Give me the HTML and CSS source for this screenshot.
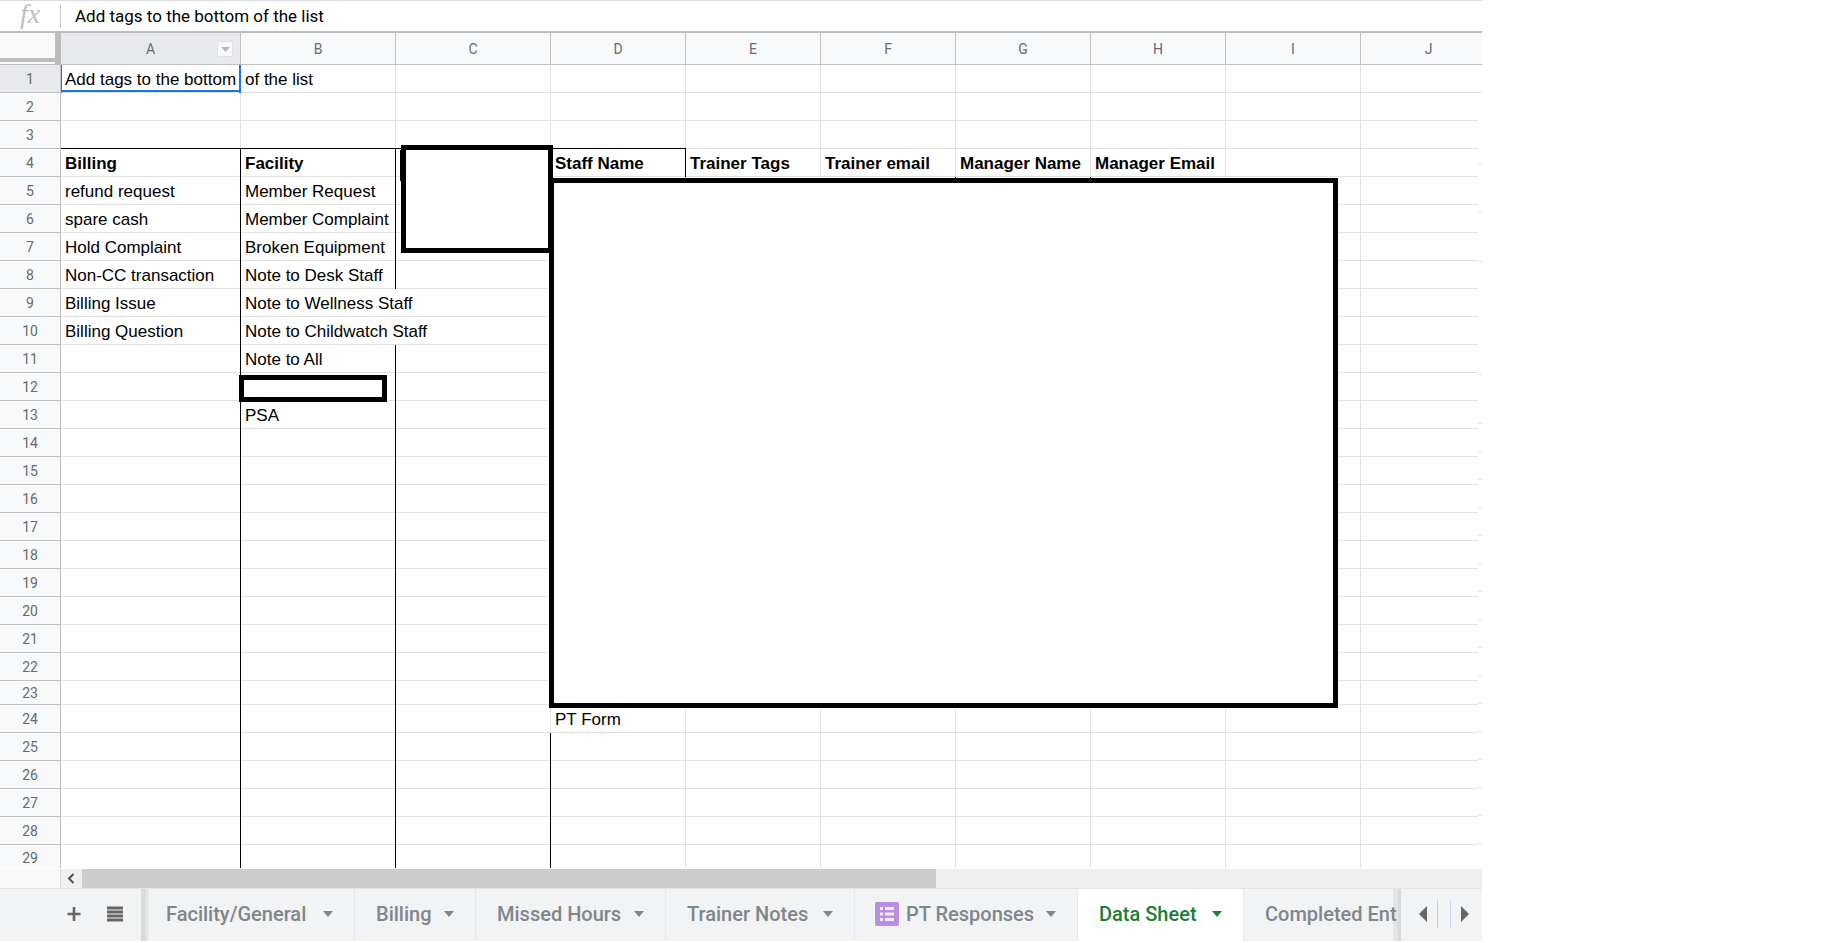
FILE: index.html
```html
<!DOCTYPE html>
<html lang="en">
<head>
<meta charset="utf-8">
<title>Data Sheet</title>
<link rel="stylesheet" href="styles.css">
</head>
<body>
<main class="app">
<div class="formula">
<label class="fx" for="formula">fx</label>
<input class="formula-input" id="formula" type="text" value="Add tags to the bottom of the list">
</div>
<div class="sheet">
<table class="grid">
<colgroup><col class="c-num"><col class="c-a"><col class="c-b"><col class="c-b"><col class="c-d"><col class="c-d"><col class="c-d"><col class="c-d"><col class="c-d"><col class="c-d"><col></colgroup>
<thead>
<tr><td class="corner"></td><th scope="col" class="active"><div class="head"><span>A</span><button class="menu" type="button" aria-label="Column A menu"><svg viewBox="0 0 14 14"><path d="M3 5h9l-4.500 5z"/></svg></button></div></th><th scope="col">B</th><th scope="col">C</th><th scope="col">D</th><th scope="col">E</th><th scope="col">F</th><th scope="col">G</th><th scope="col">H</th><th scope="col">I</th><th scope="col" class="cut">J</th></tr>
</thead>
<tbody>
<tr><th scope="row" class="active">1</th><td class="selected">Add tags to the bottom</td><td>of the list</td><td></td><td></td><td></td><td></td><td></td><td></td><td></td><td></td></tr>
<tr><th scope="row">2</th><td></td><td></td><td></td><td></td><td></td><td></td><td></td><td></td><td></td><td></td></tr>
<tr><th scope="row">3</th><td class="kb"></td><td class="kb"></td><td class="kb"></td><td class="kb"></td><td></td><td></td><td></td><td></td><td></td><td></td></tr>
<tr class="titles"><th scope="row">4</th><td class="kr">Billing</td><td class="kr">Facility</td><td></td><td class="kr">Staff Name</td><td>Trainer Tags</td><td>Trainer email</td><td>Manager Name</td><td>Manager Email</td><td></td><td></td></tr>
<tr><th scope="row">5</th><td class="kr">refund request</td><td class="kr">Member Request</td><td></td><td></td><td></td><td class="kr"></td><td class="kr"></td><td></td><td></td><td></td></tr>
<tr><th scope="row">6</th><td class="kr">spare cash</td><td class="kr">Member Complaint</td><td></td><td></td><td></td><td></td><td></td><td></td><td></td><td></td></tr>
<tr><th scope="row">7</th><td class="kr">Hold Complaint</td><td class="kr">Broken Equipment</td><td></td><td></td><td></td><td></td><td></td><td></td><td></td><td></td></tr>
<tr><th scope="row">8</th><td class="kr">Non-CC transaction</td><td class="kr">Note to Desk Staff</td><td></td><td></td><td></td><td></td><td></td><td></td><td></td><td></td></tr>
<tr><th scope="row">9</th><td class="kr">Billing Issue</td><td class="spill">Note to Wellness Staff</td><td></td><td></td><td></td><td></td><td></td><td></td><td></td><td></td></tr>
<tr><th scope="row">10</th><td class="kr">Billing Question</td><td class="spill">Note to Childwatch Staff</td><td></td><td></td><td></td><td></td><td></td><td></td><td></td><td></td></tr>
<tr><th scope="row">11</th><td class="kr"></td><td class="kr">Note to All</td><td></td><td></td><td></td><td></td><td></td><td></td><td></td><td></td></tr>
<tr><th scope="row">12</th><td class="kr"></td><td class="kr"></td><td></td><td></td><td></td><td></td><td></td><td></td><td></td><td></td></tr>
<tr><th scope="row">13</th><td class="kr"></td><td class="kr">PSA</td><td></td><td></td><td></td><td></td><td></td><td></td><td></td><td></td></tr>
<tr><th scope="row">14</th><td class="kr"></td><td class="kr"></td><td></td><td></td><td></td><td></td><td></td><td></td><td></td><td></td></tr>
<tr><th scope="row">15</th><td class="kr"></td><td class="kr"></td><td></td><td></td><td></td><td></td><td></td><td></td><td></td><td></td></tr>
<tr><th scope="row">16</th><td class="kr"></td><td class="kr"></td><td></td><td></td><td></td><td></td><td></td><td></td><td></td><td></td></tr>
<tr><th scope="row">17</th><td class="kr"></td><td class="kr"></td><td></td><td></td><td></td><td></td><td></td><td></td><td></td><td></td></tr>
<tr><th scope="row">18</th><td class="kr"></td><td class="kr"></td><td></td><td></td><td></td><td></td><td></td><td></td><td></td><td></td></tr>
<tr><th scope="row">19</th><td class="kr"></td><td class="kr"></td><td></td><td></td><td></td><td></td><td></td><td></td><td></td><td></td></tr>
<tr><th scope="row">20</th><td class="kr"></td><td class="kr"></td><td></td><td></td><td></td><td></td><td></td><td></td><td></td><td></td></tr>
<tr><th scope="row">21</th><td class="kr"></td><td class="kr"></td><td></td><td></td><td></td><td></td><td></td><td></td><td></td><td></td></tr>
<tr><th scope="row">22</th><td class="kr"></td><td class="kr"></td><td></td><td></td><td></td><td></td><td></td><td></td><td></td><td></td></tr>
<tr class="short"><th scope="row">23</th><td class="kr"></td><td class="kr"></td><td></td><td></td><td></td><td></td><td></td><td></td><td></td><td></td></tr>
<tr><th scope="row">24</th><td class="kr"></td><td class="kr"></td><td></td><td>PT Form</td><td></td><td></td><td></td><td></td><td></td><td></td></tr>
<tr><th scope="row">25</th><td class="kr"></td><td class="kr"></td><td class="kr"></td><td></td><td></td><td></td><td></td><td></td><td></td><td></td></tr>
<tr><th scope="row">26</th><td class="kr"></td><td class="kr"></td><td class="kr"></td><td></td><td></td><td></td><td></td><td></td><td></td><td></td></tr>
<tr><th scope="row">27</th><td class="kr"></td><td class="kr"></td><td class="kr"></td><td></td><td></td><td></td><td></td><td></td><td></td><td></td></tr>
<tr><th scope="row">28</th><td class="kr"></td><td class="kr"></td><td class="kr"></td><td></td><td></td><td></td><td></td><td></td><td></td><td></td></tr>
<tr class="last"><th scope="row">29</th><td class="kr"></td><td class="kr"></td><td class="kr"></td><td></td><td></td><td></td><td></td><td></td><td></td><td></td></tr>
</tbody>
</table>
<div class="box box-edge"></div>
<div class="box box-c"></div>
<div class="box box-b"></div>
<div class="box box-main"></div>
</div>
<div class="scroll">
<div class="scroll-pad"></div>
<button class="scroll-left" type="button" aria-label="Scroll left"><svg viewBox="0 0 21 19"><path d="M12.500 5L8 9.500l4.500 4.500" fill="none" stroke="#505050" stroke-width="2"/></svg></button>
<div class="track"><div class="thumb"></div></div>
</div>
<div class="tabs">
<div class="tools">
<button type="button" aria-label="Add sheet"><svg viewBox="0 0 18 18"><path d="M2.500 9h13M9 2v14" stroke="#666" stroke-width="2.600"/></svg></button>
<button type="button" aria-label="All sheets"><svg viewBox="0 0 18 18"><path d="M1 3h16M1 7h16M1 11h16M1 15h16" stroke="#666" stroke-width="2.800"/></svg></button>
</div>
<div class="divider"></div>
<nav class="strip" aria-label="Sheets">
<button class="tab first" type="button">Facility/General<svg class="caret" viewBox="0 0 10 6"><path d="M0 0h10L5 6z"/></svg></button>
<button class="tab" type="button">Billing<svg class="caret" viewBox="0 0 10 6"><path d="M0 0h10L5 6z"/></svg></button>
<button class="tab" type="button">Missed Hours<svg class="caret" viewBox="0 0 10 6"><path d="M0 0h10L5 6z"/></svg></button>
<button class="tab" type="button">Trainer Notes<svg class="caret" viewBox="0 0 10 6"><path d="M0 0h10L5 6z"/></svg></button>
<button class="tab with-icon" type="button"><svg class="form" viewBox="0 0 24 24"><rect width="24" height="24" rx="2" fill="#b98fe0"/><path d="M5 6.500h3M10 6.500h9M5 12h3M10 12h9M5 17.500h3M10 17.500h9" stroke="#f3eafa" stroke-width="3"/></svg>PT Responses<svg class="caret" viewBox="0 0 10 6"><path d="M0 0h10L5 6z"/></svg></button>
<button class="tab current" type="button" aria-current="page">Data Sheet<svg class="caret" viewBox="0 0 10 6"><path d="M0 0h10L5 6z"/></svg></button>
<button class="tab end" type="button">Completed Ent</button>
</nav>
<div class="divider flip"></div>
<div class="pager">
<button class="prev" type="button" aria-label="Previous sheets"><svg viewBox="0 0 8 16"><path d="M8 0v16L0 8z"/></svg></button>
<button class="next" type="button" aria-label="Next sheets"><svg viewBox="0 0 8 16"><path d="M0 0v16l8-8z"/></svg></button>
</div>
</div>
</main>
</body>
</html>
```

FILE: styles.css
```css
* { box-sizing: border-box; }
body { margin: 0; background: #fff; font-family: Roboto, sans-serif; }
button { margin: 0; padding: 0; border: 0; background: none; font: inherit; color: inherit; }
svg { display: block; }
.app { max-width: 1482px; overflow: hidden; }

.formula { display: flex; align-items: center; height: 33px; border-top: 1px solid #dadce0; border-bottom: 2px solid #bdbdbd; }
.fx { width: 61px; height: 23px; border-right: 1px solid #c6c6c6; font: italic 28px/18px "Liberation Serif", serif; text-align: center; color: #bdbdbd; }
.formula-input { flex: 1; height: 28px; padding: 0 14px; border: 0; outline: 0; background: none; font: 17px/28px Roboto, sans-serif; color: #000; }

.sheet { position: relative; padding-bottom: 1px; }
/* Worn right edge of the grid: stray row ticks beside the last column */
.sheet::after {
  content: "";
  position: absolute;
  right: 0;
  top: 60px;
  bottom: 0;
  width: 4px;
  background:
    linear-gradient(#e2e2e2, #e2e2e2) 0 70px / 4px 1px no-repeat,
    linear-gradient(#e2e2e2, #e2e2e2) 0 119px / 4px 1px no-repeat,
    linear-gradient(#e2e2e2, #e2e2e2) 0 168px / 4px 1px no-repeat,
    linear-gradient(#fff, #fff) 0 0 / 4px 281px no-repeat,
    linear-gradient(#e2e2e2, #e2e2e2) 0 281px / 4px 1px no-repeat,
    linear-gradient(#fff, #fff) 0 282px / 4px 48px no-repeat,
    repeating-linear-gradient(#fff 0 22px, #e2e2e2 22px 23px, #fff 23px 28px);
}
.grid { width: 100%; table-layout: fixed; border-collapse: separate; border-spacing: 0; }
.c-num { width: 61px; }
.c-a { width: 180px; }
.c-b { width: 155px; }
.c-d { width: 135px; }
.grid th { padding: 0; border: 0 solid #c0c0c0; border-width: 0 1px 1px 0; background: #f8f9fb; font: 14px/20px Roboto, sans-serif; color: #666a6e; text-align: center; }
.grid thead tr { height: 32px; }
.grid tbody tr { height: 28px; }
.grid tbody .short { height: 24px; }
.grid tbody .last { height: 23px; }
.grid .last th { padding-top: 3px; border-bottom: 0; }
.grid th.active { background: #e8e9ed; }
.grid th.cut { padding-left: 14px; border-right: 0; }
.grid td.corner { padding: 0; border-right: 6px solid #bcbcbc; border-bottom: 1px solid #c0c0c0; background: linear-gradient(#f8f9fb 25px, #bcbcbc 25px 29px, #f8f9fb 29px); box-shadow: none; }
.head { display: grid; grid-template-columns: 1fr auto 1fr; align-items: center; }
.head span { grid-column: 2; }
.menu { justify-self: end; width: 16px; height: 16px; margin-right: 7px; border: 1px solid #e0e0e0; background: #f8f9fb; }
.menu svg { fill: #b8b8b8; }
.grid td { --right: #e2e2e2; --bottom: #e2e2e2; padding: 1px 0 0 4px; box-shadow: inset -1px 0 var(--right), inset 0 -1px var(--bottom); font: 17px/20px "Liberation Sans", Arial, sans-serif; color: #000; white-space: nowrap; }
.grid .titles td { font-weight: bold; }
.grid td.kr { --right: #000; }
.grid td.kb { --bottom: #000; box-shadow: inset 0 -1px var(--bottom), inset -1px 0 var(--right); }
.grid td.spill { --right: transparent; }
.grid td:last-child { --right: transparent; }
.grid .last td { --bottom: transparent; }
.grid td.selected { box-shadow: inset 1px 0 #1a73e8, inset -2px 0 #1a73e8, inset 0 -1px #e2e2e2, inset 0 -3px #1a73e8; }

.box { position: absolute; border: 5px solid #000; background: #fff; }
.box-edge { left: 400px; top: 117px; width: 5px; height: 31px; }
.box-c { left: 401px; top: 112px; width: 152px; height: 108px; }
.box-b { left: 239px; top: 342px; width: 148px; height: 27px; }
.box-main { left: 549px; top: 145px; width: 789px; height: 530px; }

.scroll { display: flex; height: 19px; }
.scroll-pad { width: 61px; border-right: 1px solid #dcdcdc; background: #f8f8f8; }
.scroll-left { width: 21px; background: #f0f0f0; }
.track { flex: 1; background: #efefef; }
.thumb { width: 61%; height: 100%; background: #ccc; }

.tabs { display: flex; height: 53px; border-top: 1px solid #e4e5e8; background: #f1f3f4; }
.tools { display: flex; gap: 23px; align-items: center; width: 141px; padding: 0 0 3px 65px; }
.tools svg { width: 18px; height: 18px; }
.divider { width: 8px; background: linear-gradient(90deg, #d9dbda 5px, #e6e7e8 5px); }
.divider.flip { margin-left: -8px; background: linear-gradient(270deg, #d9dbda 3px, #e3e4e4 3px); }
.strip { z-index: 1; flex: 1; min-width: 0; display: grid; grid-template-columns: 206px 121px 190px 189px 223px 166px 1fr; overflow: hidden; }
.tab { display: flex; align-items: center; min-width: 0; padding: 0 21px 3px; border-right: 1px solid #e6e7ea; font: 500 20px/24px Roboto, sans-serif; color: #80868b; white-space: nowrap; }
.first { padding-left: 17px; }
.with-icon { padding-left: 20px; }
.end { padding-right: 0; border-right: 0; }
.current { background: #fff; color: #188038; }
.caret { width: 10px; height: 6px; margin-left: auto; fill: currentColor; }
.form { width: 24px; height: 24px; margin-right: 7px; }
.pager { display: flex; align-items: center; width: 81px; padding: 0 13px 3px 18px; }
.pager button { display: flex; align-items: center; height: 28px; }
.pager svg { width: 8px; height: 16px; fill: #666; }
.pager .prev { width: 19px; border-right: 1px solid #c5cdf2; }
.pager .next { flex: 1; justify-content: flex-end; margin-left: 12px; border-left: 1px solid #c9daf5; }
```
